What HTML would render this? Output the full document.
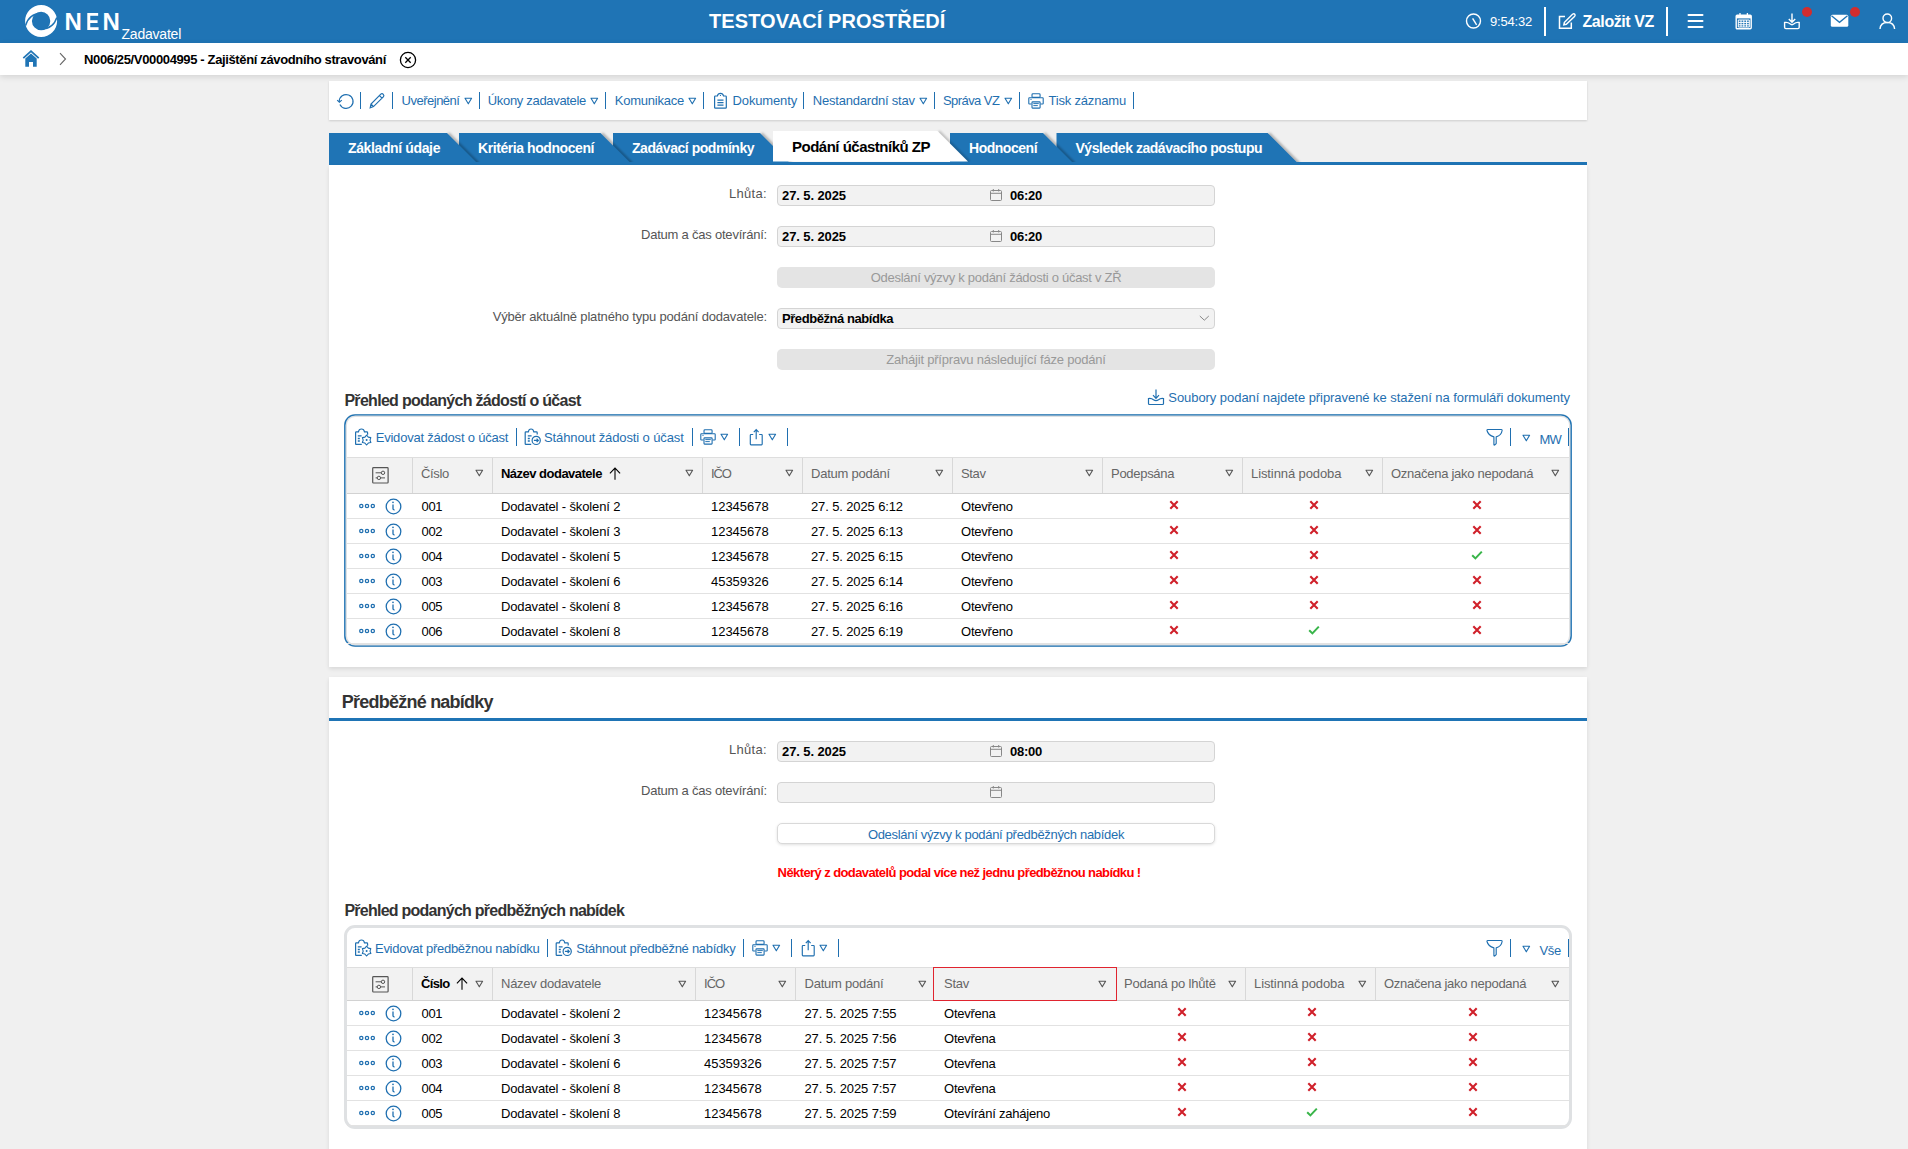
<!DOCTYPE html>
<html><head><meta charset="utf-8"><style>
html,body{margin:0;padding:0;width:1908px;height:1149px;overflow:hidden;background:#f0f0f0;}
body{position:relative;font-family:"Liberation Sans",sans-serif;}
.t{position:absolute;white-space:nowrap;font-family:"Liberation Sans",sans-serif;}
svg{overflow:visible}
</style></head><body>
<div style="position:absolute;left:0px;top:0px;width:1908px;height:43px;background:#1f74b5"></div>
<svg style="position:absolute;left:24px;top:4px" width="35" height="35" viewBox="0 0 35 35"><circle cx="17.1" cy="17" r="12.6" fill="none" stroke="#fff" stroke-width="6.8"/>
<path d="M1.6 21.5 C4 13 9 9.5 17 9.2" fill="none" stroke="#1f74b5" stroke-width="1.4"/>
<path d="M32.8 13.5 C30.5 21 25.5 24.8 17.5 25" fill="none" stroke="#1f74b5" stroke-width="1.4"/></svg>
<div class="t" style="left:64.6px;top:10px;font-size:24px;line-height:24px;color:#fff;font-weight:bold;">N</div>
<div class="t" style="left:85.6px;top:10px;font-size:24px;line-height:24px;color:#fff;font-weight:bold;transform:scaleX(0.83);transform-origin:0 0;">E</div>
<div class="t" style="left:102.4px;top:10px;font-size:24px;line-height:24px;color:#fff;font-weight:bold;">N</div>
<div class="t" style="left:121.5px;top:27px;font-size:14px;line-height:14px;color:#fff;letter-spacing:-0.217px;">Zadavatel</div>
<div class="t" style="left:709.0px;top:11px;font-size:20px;line-height:20px;color:#fff;font-weight:bold;letter-spacing:0.086px;">TESTOVACÍ PROSTŘEDÍ</div>
<svg style="position:absolute;left:1465px;top:13px" width="17" height="17" viewBox="0 0 17 17"><circle cx="8.5" cy="8" r="7" fill="none" stroke="#fff" stroke-width="1.4"/><path d="M7.6 5.3 L11.6 11.8" stroke="#fff" stroke-width="1.4" fill="none"/></svg>
<div class="t" style="left:1490.0px;top:15px;font-size:13px;line-height:13px;color:#fff;letter-spacing:-0.170px;">9:54:32</div>
<div style="position:absolute;left:1544px;top:7px;width:2px;height:29px;background:#fff"></div>
<svg style="position:absolute;left:1557px;top:12px" width="19" height="18" viewBox="0 0 19 18"><path d="M8 4.5 H2.5 V16.3 H14.3 V10.5" fill="none" stroke="#fff" stroke-width="1.5"/><path d="M7.3 10.5 L15.5 2.3 Q17 1.2 17.8 2.3 Q18.6 3.3 17.5 4.6 L9.3 12.3 L6.8 12.8 Z" fill="none" stroke="#fff" stroke-width="1.4"/></svg>
<div class="t" style="left:1582.5px;top:14px;font-size:16px;line-height:16px;color:#fff;font-weight:bold;letter-spacing:-0.411px;">Založit VZ</div>
<div style="position:absolute;left:1666px;top:7px;width:2px;height:29px;background:#fff"></div>
<svg style="position:absolute;left:1687px;top:13px" width="18" height="16" viewBox="0 0 18 16"><path d="M1.5 2 H15.5 M1.5 7.9 H15.5 M1.5 13.9 H15.5" stroke="#fff" stroke-width="2" stroke-linecap="round"/></svg>
<svg style="position:absolute;left:1735px;top:12px" width="18" height="18" viewBox="0 0 18 18"><rect x="1.2" y="3.2" width="15" height="13.6" rx="1" fill="none" stroke="#fff" stroke-width="1.4"/><rect x="1.2" y="3.2" width="15" height="3.2" fill="#fff"/><path d="M5 1 V4 M12.4 1 V4" stroke="#fff" stroke-width="1.3"/><path d="M3.3 8 H14.3 V15 H3.3 Z M3.3 10.4 H14.3 M3.3 12.8 H14.3 M6 8 V15 M8.8 8 V15 M11.6 8 V15" fill="none" stroke="#fff" stroke-width="1"/></svg>
<svg style="position:absolute;left:1783px;top:12px" width="18" height="18" viewBox="0 0 18 18"><path d="M9 1.5 V10 M5.8 7 L9 10.3 L12.2 7" fill="none" stroke="#fff" stroke-width="1.4"/><path d="M1.6 10.5 V15.3 Q1.6 16.6 2.9 16.6 H14.9 Q16.2 16.6 16.2 15.3 V10.5 Q13 10 11 11.8 Q9 13.5 7 11.8 Q5 10 1.6 10.5 Z" fill="none" stroke="#fff" stroke-width="1.4"/></svg>
<div style="position:absolute;left:1802px;top:7px;width:10px;height:10px;border-radius:50%;background:#d22d2d"></div>
<svg style="position:absolute;left:1830px;top:14px" width="19" height="14" viewBox="0 0 19 14"><rect x="0.8" y="0.8" width="17.5" height="12" rx="1.5" fill="#fff"/><path d="M1.5 1.8 L9.5 8.3 L17.5 1.8" fill="none" stroke="#1f74b5" stroke-width="1.3"/></svg>
<div style="position:absolute;left:1850px;top:7px;width:10px;height:10px;border-radius:50%;background:#d22d2d"></div>
<svg style="position:absolute;left:1879px;top:12px" width="17" height="18" viewBox="0 0 17 18"><circle cx="8.3" cy="6.3" r="4.3" fill="none" stroke="#fff" stroke-width="1.4"/><path d="M1 17 Q1.5 10.5 8.3 10.5 Q15.1 10.5 15.6 17" fill="none" stroke="#fff" stroke-width="1.4"/></svg>
<div style="position:absolute;left:0px;top:43px;width:1908px;height:32px;background:#fff;box-shadow:0 2px 6px rgba(0,0,0,0.12)"></div>
<svg style="position:absolute;left:22px;top:50px" width="18" height="18" viewBox="0 0 18 18"><path d="M1.3 8.2 L9 1.2 L16.7 8.2" fill="none" stroke="#1f74b5" stroke-width="1.8"/><path d="M3.3 8.5 L9 3.5 L14.7 8.5 V16.8 H11 V12 H7 V16.8 H3.3 Z" fill="#1f74b5"/></svg>
<svg style="position:absolute;left:58px;top:52px" width="10" height="14" viewBox="0 0 10 14"><path d="M2 1.2 L7.5 7 L2 12.8" fill="none" stroke="#666" stroke-width="1.1"/></svg>
<div class="t" style="left:84.0px;top:53px;font-size:13px;line-height:13px;color:#000;font-weight:bold;letter-spacing:-0.363px;">N006/25/V00004995 - Zajištění závodního stravování</div>
<svg style="position:absolute;left:399px;top:51px" width="18" height="18" viewBox="0 0 18 18"><circle cx="9" cy="9" r="7.6" fill="none" stroke="#000" stroke-width="1.3"/><path d="M6.3 6.3 L11.7 11.7 M11.7 6.3 L6.3 11.7" stroke="#000" stroke-width="1.3"/></svg>
<div style="position:absolute;left:329px;top:81px;width:1258px;height:39px;background:#fff;box-shadow:0 1px 2px rgba(0,0,0,0.15)"></div>
<svg style="position:absolute;left:336px;top:92px" width="18" height="18" viewBox="0 0 18 18"><path d="M3.9 12.4 A6.9 6.9 0 1 0 3.25 9.6" fill="none" stroke="#1f6fb0" stroke-width="1.2"/><path d="M1.2 8.1 L3.4 10.1 L5.8 8.1" fill="none" stroke="#1f6fb0" stroke-width="1.2"/></svg>
<div style="position:absolute;left:360px;top:92px;width:1px;height:17px;background:#1f6fb0"></div>
<svg style="position:absolute;left:368px;top:92px" width="18" height="18" viewBox="0 0 18 18"><path d="M2.2 15.8 L3 12 L12.8 2.2 Q14 1 15.3 2.3 Q16.5 3.6 15.3 4.8 L5.5 14.6 Z M11.5 3.6 L14 6.1 M3 12 L5.5 14.6" fill="none" stroke="#1f6fb0" stroke-width="1.2"/></svg>
<div style="position:absolute;left:392px;top:92px;width:1px;height:17px;background:#1f6fb0"></div>
<div class="t" style="left:401.5px;top:94px;font-size:13px;line-height:13px;color:#1f6fb0;letter-spacing:-0.489px;">Uveřejnění</div>
<svg style="position:absolute;left:464px;top:97px" width="9" height="8" viewBox="0 0 9 8"><path d="M1 1.2 H7.6 L4.3 6.8 Z" fill="none" stroke="#1f6fb0" stroke-width="1.1" stroke-linejoin="round"/></svg>
<div style="position:absolute;left:479px;top:92px;width:1px;height:17px;background:#1f6fb0"></div>
<div class="t" style="left:487.8px;top:94px;font-size:13px;line-height:13px;color:#1f6fb0;letter-spacing:-0.323px;">Úkony zadavatele</div>
<svg style="position:absolute;left:590px;top:97px" width="9" height="8" viewBox="0 0 9 8"><path d="M1 1.2 H7.6 L4.3 6.8 Z" fill="none" stroke="#1f6fb0" stroke-width="1.1" stroke-linejoin="round"/></svg>
<div style="position:absolute;left:605px;top:92px;width:1px;height:17px;background:#1f6fb0"></div>
<div class="t" style="left:614.8px;top:94px;font-size:13px;line-height:13px;color:#1f6fb0;letter-spacing:-0.236px;">Komunikace</div>
<svg style="position:absolute;left:688px;top:97px" width="9" height="8" viewBox="0 0 9 8"><path d="M1 1.2 H7.6 L4.3 6.8 Z" fill="none" stroke="#1f6fb0" stroke-width="1.1" stroke-linejoin="round"/></svg>
<div style="position:absolute;left:703px;top:92px;width:1px;height:17px;background:#1f6fb0"></div>
<svg style="position:absolute;left:713px;top:92px" width="16" height="18" viewBox="0 0 16 18"><path d="M4.4 4 H2.4 Q1.6 4 1.6 4.8 V15.4 Q1.6 16.2 2.4 16.2 H12.5 Q13.3 16.2 13.3 15.4 V4.8 Q13.3 4 12.5 4 H10.5 Q10 1.4 7.45 1.4 Q4.9 1.4 4.4 4 Z" fill="none" stroke="#1f6fb0" stroke-width="1.2"/><circle cx="7.45" cy="3.4" r="0.6" fill="#1f6fb0"/><path d="M4.4 8 H10.5 M4.4 10.5 H10.5 M4.4 13 H10.5" stroke="#1f6fb0" stroke-width="1.25"/></svg>
<div class="t" style="left:732.6px;top:94px;font-size:13px;line-height:13px;color:#1f6fb0;letter-spacing:-0.152px;">Dokumenty</div>
<div style="position:absolute;left:803px;top:92px;width:1px;height:17px;background:#1f6fb0"></div>
<div class="t" style="left:812.7px;top:94px;font-size:13px;line-height:13px;color:#1f6fb0;letter-spacing:-0.196px;">Nestandardní stav</div>
<svg style="position:absolute;left:919px;top:97px" width="9" height="8" viewBox="0 0 9 8"><path d="M1 1.2 H7.6 L4.3 6.8 Z" fill="none" stroke="#1f6fb0" stroke-width="1.1" stroke-linejoin="round"/></svg>
<div style="position:absolute;left:934px;top:92px;width:1px;height:17px;background:#1f6fb0"></div>
<div class="t" style="left:943.0px;top:94px;font-size:13px;line-height:13px;color:#1f6fb0;letter-spacing:-0.569px;">Správa VZ</div>
<svg style="position:absolute;left:1004px;top:97px" width="9" height="8" viewBox="0 0 9 8"><path d="M1 1.2 H7.6 L4.3 6.8 Z" fill="none" stroke="#1f6fb0" stroke-width="1.1" stroke-linejoin="round"/></svg>
<div style="position:absolute;left:1019px;top:92px;width:1px;height:17px;background:#1f6fb0"></div>
<svg style="position:absolute;left:1027px;top:92px" width="18" height="18" viewBox="0 0 18 18"><rect x="5.0" y="1.8" width="8.1" height="3.6" rx="0.9" fill="none" stroke="#1f6fb0" stroke-width="1.1"/><path d="M4.6 12 H2.4 Q1.8 12 1.8 11.4 V6.4 Q1.8 5.8 2.4 5.8 H15.6 Q16.2 5.8 16.2 6.4 V11.4 Q16.2 12 15.6 12 H13.4" fill="none" stroke="#1f6fb0" stroke-width="1.1"/><rect x="5.0" y="9.9" width="8.1" height="6.2" rx="0.6" fill="#fff" stroke="#1f6fb0" stroke-width="1.1"/><path d="M6.3 11.6 H11.8 M6.3 13.6 H10.8 M3.4 7.4 H4.6" stroke="#1f6fb0" stroke-width="0.95"/></svg>
<div class="t" style="left:1048.4px;top:94px;font-size:13px;line-height:13px;color:#1f6fb0;letter-spacing:-0.177px;">Tisk záznamu</div>
<div style="position:absolute;left:1133px;top:92px;width:1px;height:17px;background:#1f6fb0"></div>
<svg style="position:absolute;left:0;top:0" width="1908" height="170"><defs><filter id="blur" x="-20%" y="-20%" width="140%" height="140%"><feGaussianBlur stdDeviation="0.9"/></filter></defs><path d="M1059.5 132 H1268.7" stroke="rgba(0,0,0,0.16)" stroke-width="2" fill="none" filter="url(#blur)"/><path d="M1269.0 133.5 L1299.0 163.5" stroke="rgba(0,0,0,0.28)" stroke-width="3" fill="none" filter="url(#blur)"/><path d="M1056.5 133 H1267.7 L1297.7 163 H1056.5 Z" fill="#1f74b5"/><path d="M953 132 H1044" stroke="rgba(0,0,0,0.16)" stroke-width="2" fill="none" filter="url(#blur)"/><path d="M1044.3 133.5 L1074.3 163.5" stroke="rgba(0,0,0,0.28)" stroke-width="3" fill="none" filter="url(#blur)"/><path d="M950 133 H1043 L1073 163 H950 Z" fill="#1f74b5"/><path d="M616 132 H761" stroke="rgba(0,0,0,0.16)" stroke-width="2" fill="none" filter="url(#blur)"/><path d="M761.3 133.5 L791.3 163.5" stroke="rgba(0,0,0,0.28)" stroke-width="3" fill="none" filter="url(#blur)"/><path d="M613 133 H760 L790 163 H613 Z" fill="#1f74b5"/><path d="M462 132 H601.5" stroke="rgba(0,0,0,0.16)" stroke-width="2" fill="none" filter="url(#blur)"/><path d="M601.8 133.5 L631.8 163.5" stroke="rgba(0,0,0,0.28)" stroke-width="3" fill="none" filter="url(#blur)"/><path d="M459 133 H600.5 L630.5 163 H459 Z" fill="#1f74b5"/><path d="M332 132 H448" stroke="rgba(0,0,0,0.16)" stroke-width="2" fill="none" filter="url(#blur)"/><path d="M448.3 133.5 L478.3 163.5" stroke="rgba(0,0,0,0.28)" stroke-width="3" fill="none" filter="url(#blur)"/><path d="M329 133 H447 L477 163 H329 Z" fill="#1f74b5"/><path d="M938.7 131.5 L968.7 161.5" stroke="rgba(0,0,0,0.22)" stroke-width="3" fill="none" filter="url(#blur)"/><path d="M773 131 H937.5 L968.0 161.5 H773 Z" fill="#fff"/></svg>
<div style="position:absolute;left:329px;top:162px;width:1258px;height:3px;background:#1f74b5"></div>
<div class="t" style="left:348.0px;top:141px;font-size:14px;line-height:14px;color:#fff;font-weight:bold;letter-spacing:-0.372px;">Základní údaje</div>
<div class="t" style="left:478.0px;top:141px;font-size:14px;line-height:14px;color:#fff;font-weight:bold;letter-spacing:-0.424px;">Kritéria hodnocení</div>
<div class="t" style="left:632.0px;top:141px;font-size:14px;line-height:14px;color:#fff;font-weight:bold;letter-spacing:-0.463px;">Zadávací podmínky</div>
<div class="t" style="left:792.0px;top:139px;font-size:15px;line-height:15px;color:#000;font-weight:bold;letter-spacing:-0.500px;">Podání účastníků ZP</div>
<div class="t" style="left:969.0px;top:141px;font-size:14px;line-height:14px;color:#fff;font-weight:bold;letter-spacing:-0.477px;">Hodnocení</div>
<div class="t" style="left:1075.5px;top:141px;font-size:14px;line-height:14px;color:#fff;font-weight:bold;letter-spacing:-0.466px;">Výsledek zadávacího postupu</div>
<div style="position:absolute;left:329px;top:165px;width:1258px;height:502px;background:#fff;box-shadow:0 2px 4px rgba(0,0,0,0.10)"></div>
<div class="t" style="left:729.0px;top:187px;font-size:13px;line-height:13px;color:#555;letter-spacing:0.307px;">Lhůta:</div>
<div style="position:absolute;left:777px;top:185px;width:436px;height:19px;background:#f2f2f2;border:1px solid #d4d4d4;border-radius:4px"></div>
<svg style="position:absolute;left:989px;top:188px" width="14" height="14" viewBox="0 0 14 14"><rect x="1.5" y="2.5" width="11" height="10" rx="1" fill="none" stroke="#888" stroke-width="1"/><path d="M1.5 5.3 H12.5 M4.3 1 V3.5 M9.7 1 V3.5" stroke="#888" stroke-width="1"/></svg>
<div class="t" style="left:782.0px;top:189px;font-size:13px;line-height:13px;color:#000;font-weight:bold;letter-spacing:-0.098px;">27. 5. 2025</div>
<div class="t" style="left:1010.0px;top:189px;font-size:13px;line-height:13px;color:#000;font-weight:bold;letter-spacing:-0.253px;">06:20</div>
<div class="t" style="left:641.0px;top:228px;font-size:13px;line-height:13px;color:#555;letter-spacing:-0.218px;">Datum a čas otevírání:</div>
<div style="position:absolute;left:777px;top:226px;width:436px;height:19px;background:#f2f2f2;border:1px solid #d4d4d4;border-radius:4px"></div>
<svg style="position:absolute;left:989px;top:229px" width="14" height="14" viewBox="0 0 14 14"><rect x="1.5" y="2.5" width="11" height="10" rx="1" fill="none" stroke="#888" stroke-width="1"/><path d="M1.5 5.3 H12.5 M4.3 1 V3.5 M9.7 1 V3.5" stroke="#888" stroke-width="1"/></svg>
<div class="t" style="left:782.0px;top:230px;font-size:13px;line-height:13px;color:#000;font-weight:bold;letter-spacing:-0.098px;">27. 5. 2025</div>
<div class="t" style="left:1010.0px;top:230px;font-size:13px;line-height:13px;color:#000;font-weight:bold;letter-spacing:-0.253px;">06:20</div>
<div style="position:absolute;left:777px;top:267px;width:438px;height:21px;background:#e4e4e4;border-radius:5px"></div>
<div class="t" style="left:870.8px;top:271px;font-size:13px;line-height:13px;color:#999;letter-spacing:-0.285px;">Odeslání výzvy k podání žádosti o účast v ZŘ</div>
<div class="t" style="left:492.7px;top:310px;font-size:13px;line-height:13px;color:#555;letter-spacing:-0.179px;">Výběr aktuálně platného typu podání dodavatele:</div>
<div style="position:absolute;left:777px;top:308px;width:436px;height:19px;background:#f2f2f2;border:1px solid #d4d4d4;border-radius:4px"></div>
<div class="t" style="left:782.0px;top:312px;font-size:13px;line-height:13px;color:#000;font-weight:bold;letter-spacing:-0.440px;">Předběžná nabídka</div>
<svg style="position:absolute;left:1198px;top:313px" width="12" height="10" viewBox="0 0 12 10"><path d="M1.8 3 L6.3 7.2 L10.8 3" fill="none" stroke="#888" stroke-width="1"/></svg>
<div style="position:absolute;left:777px;top:349px;width:438px;height:21px;background:#e4e4e4;border-radius:5px"></div>
<div class="t" style="left:886.2px;top:353px;font-size:13px;line-height:13px;color:#999;letter-spacing:-0.203px;">Zahájit přípravu následující fáze podání</div>
<div class="t" style="left:344.4px;top:393px;font-size:16px;line-height:16px;color:#333;font-weight:bold;letter-spacing:-0.704px;">Přehled podaných žádostí o účast</div>
<svg style="position:absolute;left:1147px;top:388px" width="18" height="18" viewBox="0 0 18 18"><path d="M9 1.5 V10.3 M6 7.2 L9 10.3 L12 7.2" fill="none" stroke="#1f6fb0" stroke-width="1.2"/><path d="M1.5 10.5 V15.5 Q1.5 16.5 2.5 16.5 H15.5 Q16.5 16.5 16.5 15.5 V10.5 Q13.5 10 11.5 11.8 Q9 13.5 6.5 11.8 Q4.5 10 1.5 10.5 Z" fill="none" stroke="#1f6fb0" stroke-width="1.2"/></svg>
<div class="t" style="left:1168.3px;top:391px;font-size:13px;line-height:13px;color:#1f6fb0;letter-spacing:-0.057px;">Soubory podaní najdete připravené ke stažení na formuláři dokumenty</div>
<div style="position:absolute;left:344px;top:414px;width:1222px;height:227px;border:3px solid #dfe1e3;border-radius:11px;background:#fff"></div>
<svg style="position:absolute;left:0;top:0" width="1908" height="1149"><rect x="344.8" y="414.8" width="1226.4" height="231.4" rx="10.5" fill="none" stroke="#1f74b5" stroke-width="1.35"/></svg>
<svg style="position:absolute;left:355px;top:428px" width="18" height="18" viewBox="0 0 18 18"><path d="M6.8 16.4 H1.3 Q0.6 16.4 0.6 15.7 V4.6 Q0.6 3.9 1.3 3.9 H3.4 Q3.9 1 6.45 1 Q9 1 9.5 3.9 H11.8 Q12.6 3.9 12.6 4.7 V6.8" fill="none" stroke="#1f6fb0" stroke-width="1.2"/><path d="M2.8 7.8 H6.6 M2.8 10.5 H4.8 M2.8 13 H4.8" stroke="#1f6fb0" stroke-width="1.3"/><polygon points="11.60,7.20 9.90,9.16 7.36,9.65 8.20,12.10 7.36,14.55 9.90,15.04 11.60,17.00 13.30,15.04 15.84,14.55 15.00,12.10 15.84,9.65 13.30,9.16" fill="#fff" stroke="#1f6fb0" stroke-width="1.1" stroke-linejoin="round"/><circle cx="11.6" cy="12.1" r="1" fill="#1f6fb0"/></svg>
<div class="t" style="left:375.7px;top:431px;font-size:13px;line-height:13px;color:#1f6fb0;letter-spacing:-0.210px;">Evidovat žádost o účast</div>
<div style="position:absolute;left:516px;top:428px;width:1px;height:18px;background:#1f6fb0"></div>
<svg style="position:absolute;left:524px;top:428px" width="18" height="18" viewBox="0 0 18 18"><path d="M7.2 16.4 H1.9 Q1.2 16.4 1.2 15.7 V4.6 Q1.2 3.9 1.9 3.9 H4.3 Q4.8 1 7.05 1 Q9.3 1 9.8 3.9 H12.4 Q13.2 3.9 13.2 4.7 V6.6" fill="none" stroke="#1f6fb0" stroke-width="1.2"/><path d="M3.8 7.8 H7.6 M3.8 10.5 H5.8 M3.8 13 H5.8" stroke="#1f6fb0" stroke-width="1.3"/><circle cx="12.2" cy="12.4" r="4.1" fill="#fff" stroke="#1f6fb0" stroke-width="1.2"/><path d="M9.9 12.4 H14.3 M12.6 10.7 L14.3 12.4 L12.6 14.1" fill="none" stroke="#1f6fb0" stroke-width="1.2"/></svg>
<div class="t" style="left:544.0px;top:431px;font-size:13px;line-height:13px;color:#1f6fb0;letter-spacing:-0.109px;">Stáhnout žádosti o účast</div>
<div style="position:absolute;left:692px;top:428px;width:1px;height:18px;background:#1f6fb0"></div>
<svg style="position:absolute;left:699px;top:428px" width="18" height="18" viewBox="0 0 18 18"><rect x="5.0" y="1.8" width="8.1" height="3.6" rx="0.9" fill="none" stroke="#1f6fb0" stroke-width="1.1"/><path d="M4.6 12 H2.4 Q1.8 12 1.8 11.4 V6.4 Q1.8 5.8 2.4 5.8 H15.6 Q16.2 5.8 16.2 6.4 V11.4 Q16.2 12 15.6 12 H13.4" fill="none" stroke="#1f6fb0" stroke-width="1.1"/><rect x="5.0" y="9.9" width="8.1" height="6.2" rx="0.6" fill="#fff" stroke="#1f6fb0" stroke-width="1.1"/><path d="M6.3 11.6 H11.8 M6.3 13.6 H10.8 M3.4 7.4 H4.6" stroke="#1f6fb0" stroke-width="0.95"/></svg>
<svg style="position:absolute;left:720px;top:433px" width="9" height="8" viewBox="0 0 9 8"><path d="M1 1.2 H7.6 L4.3 6.8 Z" fill="none" stroke="#1f6fb0" stroke-width="1.1" stroke-linejoin="round"/></svg>
<div style="position:absolute;left:739px;top:428px;width:1px;height:18px;background:#1f6fb0"></div>
<svg style="position:absolute;left:748px;top:428px" width="16" height="18" viewBox="0 0 16 18"><path d="M8.2 11.3 V1.8 M5.8 4.2 L8.2 1.6 L10.6 4.2" fill="none" stroke="#1f6fb0" stroke-width="1.15"/><path d="M5.2 6.5 H3 Q2.3 6.5 2.3 7.2 V16.1 Q2.3 16.8 3 16.8 H13.5 Q14.2 16.8 14.2 16.1 V7.2 Q14.2 6.5 13.5 6.5 H11.2" fill="none" stroke="#1f6fb0" stroke-width="1.15"/></svg>
<svg style="position:absolute;left:768px;top:433px" width="9" height="8" viewBox="0 0 9 8"><path d="M1 1.2 H7.6 L4.3 6.8 Z" fill="none" stroke="#1f6fb0" stroke-width="1.1" stroke-linejoin="round"/></svg>
<div style="position:absolute;left:787px;top:428px;width:1px;height:18px;background:#1f6fb0"></div>
<svg style="position:absolute;left:1486px;top:428px" width="18" height="18" viewBox="0 0 18 18"><path d="M1.6 1.5 H15.4 Q16.2 1.5 16.1 2.5 Q15.5 7.2 10.2 8.9 V15.6 L8.6 17 Q7.9 17.3 7.9 16.5 V8.9 Q2.2 7.2 1 2.5 Q0.9 1.5 1.6 1.5 Z" fill="none" stroke="#1f6fb0" stroke-width="1.15" stroke-linejoin="round"/></svg>
<div style="position:absolute;left:1510px;top:428px;width:1px;height:18px;background:#1f6fb0"></div>
<svg style="position:absolute;left:1522px;top:434px" width="9" height="8" viewBox="0 0 9 8"><path d="M1 1.2 H7.6 L4.3 6.8 Z" fill="none" stroke="#1f6fb0" stroke-width="1.1" stroke-linejoin="round"/></svg>
<div class="t" style="left:1539.5px;top:433px;font-size:13px;line-height:13px;color:#1f6fb0;letter-spacing:-0.797px;">MW</div>
<div style="position:absolute;left:1568px;top:428px;width:1px;height:18px;background:#1f6fb0"></div>
<div style="position:absolute;left:347px;top:456.5px;width:1222px;height:37.5px;background:#f2f2f2;border-top:1px solid #dedede;border-bottom:1px solid #d2d2d2;box-sizing:border-box"></div>
<div style="position:absolute;left:412px;top:457.5px;width:1px;height:35.5px;background:#d8d8d8"></div>
<div style="position:absolute;left:492px;top:457.5px;width:1px;height:35.5px;background:#d8d8d8"></div>
<div style="position:absolute;left:702px;top:457.5px;width:1px;height:35.5px;background:#d8d8d8"></div>
<div style="position:absolute;left:802px;top:457.5px;width:1px;height:35.5px;background:#d8d8d8"></div>
<div style="position:absolute;left:952px;top:457.5px;width:1px;height:35.5px;background:#d8d8d8"></div>
<div style="position:absolute;left:1102px;top:457.5px;width:1px;height:35.5px;background:#d8d8d8"></div>
<div style="position:absolute;left:1242px;top:457.5px;width:1px;height:35.5px;background:#d8d8d8"></div>
<div style="position:absolute;left:1382px;top:457.5px;width:1px;height:35.5px;background:#d8d8d8"></div>
<svg style="position:absolute;left:372px;top:466.5px" width="18" height="18" viewBox="0 0 18 18"><rect x="0.7" y="0.6" width="15.4" height="15.4" rx="0.8" fill="none" stroke="#555" stroke-width="1.2"/><path d="M3.6 5.8 H13 M3.6 10.9 H13" stroke="#555" stroke-width="1"/><circle cx="11" cy="5.8" r="1.7" fill="#f2f2f2" stroke="#555" stroke-width="1"/><circle cx="6.9" cy="10.9" r="1.7" fill="#f2f2f2" stroke="#555" stroke-width="1"/></svg>
<div class="t" style="left:421.0px;top:467px;font-size:13px;line-height:13px;color:#666;letter-spacing:-0.325px;">Číslo</div>
<svg style="position:absolute;left:474.5px;top:469.0px" width="9" height="8" viewBox="0 0 9 8"><path d="M1 1.2 H7.6 L4.3 6.8 Z" fill="none" stroke="#555" stroke-width="1.1" stroke-linejoin="round"/></svg>
<div class="t" style="left:501.0px;top:467px;font-size:13px;line-height:13px;color:#000;font-weight:bold;letter-spacing:-0.514px;">Název dodavatele</div>
<svg style="position:absolute;left:684.5px;top:469.0px" width="9" height="8" viewBox="0 0 9 8"><path d="M1 1.2 H7.6 L4.3 6.8 Z" fill="none" stroke="#555" stroke-width="1.1" stroke-linejoin="round"/></svg>
<div class="t" style="left:711.0px;top:467px;font-size:13px;line-height:13px;color:#666;letter-spacing:-1.136px;">IČO</div>
<svg style="position:absolute;left:784.5px;top:469.0px" width="9" height="8" viewBox="0 0 9 8"><path d="M1 1.2 H7.6 L4.3 6.8 Z" fill="none" stroke="#555" stroke-width="1.1" stroke-linejoin="round"/></svg>
<div class="t" style="left:811.0px;top:467px;font-size:13px;line-height:13px;color:#666;letter-spacing:-0.224px;">Datum podání</div>
<svg style="position:absolute;left:934.5px;top:469.0px" width="9" height="8" viewBox="0 0 9 8"><path d="M1 1.2 H7.6 L4.3 6.8 Z" fill="none" stroke="#555" stroke-width="1.1" stroke-linejoin="round"/></svg>
<div class="t" style="left:961.0px;top:467px;font-size:13px;line-height:13px;color:#666;letter-spacing:-0.379px;">Stav</div>
<svg style="position:absolute;left:1084.5px;top:469.0px" width="9" height="8" viewBox="0 0 9 8"><path d="M1 1.2 H7.6 L4.3 6.8 Z" fill="none" stroke="#555" stroke-width="1.1" stroke-linejoin="round"/></svg>
<div class="t" style="left:1111.0px;top:467px;font-size:13px;line-height:13px;color:#666;letter-spacing:-0.290px;">Podepsána</div>
<svg style="position:absolute;left:1224.5px;top:469.0px" width="9" height="8" viewBox="0 0 9 8"><path d="M1 1.2 H7.6 L4.3 6.8 Z" fill="none" stroke="#555" stroke-width="1.1" stroke-linejoin="round"/></svg>
<div class="t" style="left:1251.0px;top:467px;font-size:13px;line-height:13px;color:#666;letter-spacing:-0.096px;">Listinná podoba</div>
<svg style="position:absolute;left:1365px;top:469.0px" width="9" height="8" viewBox="0 0 9 8"><path d="M1 1.2 H7.6 L4.3 6.8 Z" fill="none" stroke="#555" stroke-width="1.1" stroke-linejoin="round"/></svg>
<div class="t" style="left:1391.0px;top:467px;font-size:13px;line-height:13px;color:#666;letter-spacing:-0.270px;">Označena jako nepodaná</div>
<svg style="position:absolute;left:1550.5px;top:469.0px" width="9" height="8" viewBox="0 0 9 8"><path d="M1 1.2 H7.6 L4.3 6.8 Z" fill="none" stroke="#555" stroke-width="1.1" stroke-linejoin="round"/></svg>
<svg style="position:absolute;left:608.5px;top:465.7px" width="12" height="15" viewBox="0 0 12 15"><path d="M6 13.8 V1.9 M0.9 7.4 L6 2 L11.1 7.4" fill="none" stroke="#000" stroke-width="1.1"/></svg>
<div style="position:absolute;left:347px;top:518px;width:1222px;height:1px;background:#e2e2e2"></div>
<svg style="position:absolute;left:358px;top:503px" width="18" height="6" viewBox="0 0 18 6"><circle cx="3.3" cy="3" r="1.65" fill="none" stroke="#1f6fb0" stroke-width="1.25"/><circle cx="9" cy="3" r="1.65" fill="none" stroke="#1f6fb0" stroke-width="1.25"/><circle cx="14.8" cy="3" r="1.65" fill="none" stroke="#1f6fb0" stroke-width="1.25"/></svg>
<svg style="position:absolute;left:384.5px;top:497.5px" width="17" height="17" viewBox="0 0 17 17"><circle cx="8.5" cy="8.5" r="7.3" fill="none" stroke="#1f6fb0" stroke-width="1.3"/><path d="M8 6.6 V10.6 Q8 12 9.6 11.8" fill="none" stroke="#1f6fb0" stroke-width="1.3"/><circle cx="8" cy="4.3" r="0.85" fill="#1f6fb0"/></svg>
<div class="t" style="left:421.5px;top:500px;font-size:13px;line-height:13px;color:#000;letter-spacing:-0.334px;">001</div>
<div class="t" style="left:501.0px;top:500px;font-size:13px;line-height:13px;color:#000;letter-spacing:-0.136px;">Dodavatel - školení 2</div>
<div class="t" style="left:711.0px;top:500px;font-size:13px;line-height:13px;color:#000;letter-spacing:-0.022px;">12345678</div>
<div class="t" style="left:811.0px;top:500px;font-size:13px;line-height:13px;color:#000;letter-spacing:-0.125px;">27. 5. 2025 6:12</div>
<div class="t" style="left:961.0px;top:500px;font-size:13px;line-height:13px;color:#000;letter-spacing:-0.223px;">Otevřeno</div>
<svg style="position:absolute;left:1168.5px;top:500px" width="10" height="10" viewBox="0 0 10 10"><path d="M1.3 1.3 L8.7 8.7 M8.7 1.3 L1.3 8.7" stroke="#d0202a" stroke-width="2.1"/></svg>
<svg style="position:absolute;left:1308.5px;top:500px" width="10" height="10" viewBox="0 0 10 10"><path d="M1.3 1.3 L8.7 8.7 M8.7 1.3 L1.3 8.7" stroke="#d0202a" stroke-width="2.1"/></svg>
<svg style="position:absolute;left:1471.5px;top:500px" width="10" height="10" viewBox="0 0 10 10"><path d="M1.3 1.3 L8.7 8.7 M8.7 1.3 L1.3 8.7" stroke="#d0202a" stroke-width="2.1"/></svg>
<div style="position:absolute;left:347px;top:543px;width:1222px;height:1px;background:#e2e2e2"></div>
<svg style="position:absolute;left:358px;top:528px" width="18" height="6" viewBox="0 0 18 6"><circle cx="3.3" cy="3" r="1.65" fill="none" stroke="#1f6fb0" stroke-width="1.25"/><circle cx="9" cy="3" r="1.65" fill="none" stroke="#1f6fb0" stroke-width="1.25"/><circle cx="14.8" cy="3" r="1.65" fill="none" stroke="#1f6fb0" stroke-width="1.25"/></svg>
<svg style="position:absolute;left:384.5px;top:522.5px" width="17" height="17" viewBox="0 0 17 17"><circle cx="8.5" cy="8.5" r="7.3" fill="none" stroke="#1f6fb0" stroke-width="1.3"/><path d="M8 6.6 V10.6 Q8 12 9.6 11.8" fill="none" stroke="#1f6fb0" stroke-width="1.3"/><circle cx="8" cy="4.3" r="0.85" fill="#1f6fb0"/></svg>
<div class="t" style="left:421.5px;top:525px;font-size:13px;line-height:13px;color:#000;letter-spacing:-0.334px;">002</div>
<div class="t" style="left:501.0px;top:525px;font-size:13px;line-height:13px;color:#000;letter-spacing:-0.136px;">Dodavatel - školení 3</div>
<div class="t" style="left:711.0px;top:525px;font-size:13px;line-height:13px;color:#000;letter-spacing:-0.022px;">12345678</div>
<div class="t" style="left:811.0px;top:525px;font-size:13px;line-height:13px;color:#000;letter-spacing:-0.125px;">27. 5. 2025 6:13</div>
<div class="t" style="left:961.0px;top:525px;font-size:13px;line-height:13px;color:#000;letter-spacing:-0.223px;">Otevřeno</div>
<svg style="position:absolute;left:1168.5px;top:525px" width="10" height="10" viewBox="0 0 10 10"><path d="M1.3 1.3 L8.7 8.7 M8.7 1.3 L1.3 8.7" stroke="#d0202a" stroke-width="2.1"/></svg>
<svg style="position:absolute;left:1308.5px;top:525px" width="10" height="10" viewBox="0 0 10 10"><path d="M1.3 1.3 L8.7 8.7 M8.7 1.3 L1.3 8.7" stroke="#d0202a" stroke-width="2.1"/></svg>
<svg style="position:absolute;left:1471.5px;top:525px" width="10" height="10" viewBox="0 0 10 10"><path d="M1.3 1.3 L8.7 8.7 M8.7 1.3 L1.3 8.7" stroke="#d0202a" stroke-width="2.1"/></svg>
<div style="position:absolute;left:347px;top:568px;width:1222px;height:1px;background:#e2e2e2"></div>
<svg style="position:absolute;left:358px;top:553px" width="18" height="6" viewBox="0 0 18 6"><circle cx="3.3" cy="3" r="1.65" fill="none" stroke="#1f6fb0" stroke-width="1.25"/><circle cx="9" cy="3" r="1.65" fill="none" stroke="#1f6fb0" stroke-width="1.25"/><circle cx="14.8" cy="3" r="1.65" fill="none" stroke="#1f6fb0" stroke-width="1.25"/></svg>
<svg style="position:absolute;left:384.5px;top:547.5px" width="17" height="17" viewBox="0 0 17 17"><circle cx="8.5" cy="8.5" r="7.3" fill="none" stroke="#1f6fb0" stroke-width="1.3"/><path d="M8 6.6 V10.6 Q8 12 9.6 11.8" fill="none" stroke="#1f6fb0" stroke-width="1.3"/><circle cx="8" cy="4.3" r="0.85" fill="#1f6fb0"/></svg>
<div class="t" style="left:421.5px;top:550px;font-size:13px;line-height:13px;color:#000;letter-spacing:-0.334px;">004</div>
<div class="t" style="left:501.0px;top:550px;font-size:13px;line-height:13px;color:#000;letter-spacing:-0.136px;">Dodavatel - školení 5</div>
<div class="t" style="left:711.0px;top:550px;font-size:13px;line-height:13px;color:#000;letter-spacing:-0.022px;">12345678</div>
<div class="t" style="left:811.0px;top:550px;font-size:13px;line-height:13px;color:#000;letter-spacing:-0.125px;">27. 5. 2025 6:15</div>
<div class="t" style="left:961.0px;top:550px;font-size:13px;line-height:13px;color:#000;letter-spacing:-0.223px;">Otevřeno</div>
<svg style="position:absolute;left:1168.5px;top:550px" width="10" height="10" viewBox="0 0 10 10"><path d="M1.3 1.3 L8.7 8.7 M8.7 1.3 L1.3 8.7" stroke="#d0202a" stroke-width="2.1"/></svg>
<svg style="position:absolute;left:1308.5px;top:550px" width="10" height="10" viewBox="0 0 10 10"><path d="M1.3 1.3 L8.7 8.7 M8.7 1.3 L1.3 8.7" stroke="#d0202a" stroke-width="2.1"/></svg>
<svg style="position:absolute;left:1470.5px;top:550px" width="12" height="10" viewBox="0 0 12 10"><path d="M1.2 5.2 L4.4 8.4 L10.8 1.6" fill="none" stroke="#39b54a" stroke-width="2"/></svg>
<div style="position:absolute;left:347px;top:593px;width:1222px;height:1px;background:#e2e2e2"></div>
<svg style="position:absolute;left:358px;top:578px" width="18" height="6" viewBox="0 0 18 6"><circle cx="3.3" cy="3" r="1.65" fill="none" stroke="#1f6fb0" stroke-width="1.25"/><circle cx="9" cy="3" r="1.65" fill="none" stroke="#1f6fb0" stroke-width="1.25"/><circle cx="14.8" cy="3" r="1.65" fill="none" stroke="#1f6fb0" stroke-width="1.25"/></svg>
<svg style="position:absolute;left:384.5px;top:572.5px" width="17" height="17" viewBox="0 0 17 17"><circle cx="8.5" cy="8.5" r="7.3" fill="none" stroke="#1f6fb0" stroke-width="1.3"/><path d="M8 6.6 V10.6 Q8 12 9.6 11.8" fill="none" stroke="#1f6fb0" stroke-width="1.3"/><circle cx="8" cy="4.3" r="0.85" fill="#1f6fb0"/></svg>
<div class="t" style="left:421.5px;top:575px;font-size:13px;line-height:13px;color:#000;letter-spacing:-0.334px;">003</div>
<div class="t" style="left:501.0px;top:575px;font-size:13px;line-height:13px;color:#000;letter-spacing:-0.136px;">Dodavatel - školení 6</div>
<div class="t" style="left:711.0px;top:575px;font-size:13px;line-height:13px;color:#000;letter-spacing:-0.022px;">45359326</div>
<div class="t" style="left:811.0px;top:575px;font-size:13px;line-height:13px;color:#000;letter-spacing:-0.125px;">27. 5. 2025 6:14</div>
<div class="t" style="left:961.0px;top:575px;font-size:13px;line-height:13px;color:#000;letter-spacing:-0.223px;">Otevřeno</div>
<svg style="position:absolute;left:1168.5px;top:575px" width="10" height="10" viewBox="0 0 10 10"><path d="M1.3 1.3 L8.7 8.7 M8.7 1.3 L1.3 8.7" stroke="#d0202a" stroke-width="2.1"/></svg>
<svg style="position:absolute;left:1308.5px;top:575px" width="10" height="10" viewBox="0 0 10 10"><path d="M1.3 1.3 L8.7 8.7 M8.7 1.3 L1.3 8.7" stroke="#d0202a" stroke-width="2.1"/></svg>
<svg style="position:absolute;left:1471.5px;top:575px" width="10" height="10" viewBox="0 0 10 10"><path d="M1.3 1.3 L8.7 8.7 M8.7 1.3 L1.3 8.7" stroke="#d0202a" stroke-width="2.1"/></svg>
<div style="position:absolute;left:347px;top:618px;width:1222px;height:1px;background:#e2e2e2"></div>
<svg style="position:absolute;left:358px;top:603px" width="18" height="6" viewBox="0 0 18 6"><circle cx="3.3" cy="3" r="1.65" fill="none" stroke="#1f6fb0" stroke-width="1.25"/><circle cx="9" cy="3" r="1.65" fill="none" stroke="#1f6fb0" stroke-width="1.25"/><circle cx="14.8" cy="3" r="1.65" fill="none" stroke="#1f6fb0" stroke-width="1.25"/></svg>
<svg style="position:absolute;left:384.5px;top:597.5px" width="17" height="17" viewBox="0 0 17 17"><circle cx="8.5" cy="8.5" r="7.3" fill="none" stroke="#1f6fb0" stroke-width="1.3"/><path d="M8 6.6 V10.6 Q8 12 9.6 11.8" fill="none" stroke="#1f6fb0" stroke-width="1.3"/><circle cx="8" cy="4.3" r="0.85" fill="#1f6fb0"/></svg>
<div class="t" style="left:421.5px;top:600px;font-size:13px;line-height:13px;color:#000;letter-spacing:-0.334px;">005</div>
<div class="t" style="left:501.0px;top:600px;font-size:13px;line-height:13px;color:#000;letter-spacing:-0.136px;">Dodavatel - školení 8</div>
<div class="t" style="left:711.0px;top:600px;font-size:13px;line-height:13px;color:#000;letter-spacing:-0.022px;">12345678</div>
<div class="t" style="left:811.0px;top:600px;font-size:13px;line-height:13px;color:#000;letter-spacing:-0.125px;">27. 5. 2025 6:16</div>
<div class="t" style="left:961.0px;top:600px;font-size:13px;line-height:13px;color:#000;letter-spacing:-0.223px;">Otevřeno</div>
<svg style="position:absolute;left:1168.5px;top:600px" width="10" height="10" viewBox="0 0 10 10"><path d="M1.3 1.3 L8.7 8.7 M8.7 1.3 L1.3 8.7" stroke="#d0202a" stroke-width="2.1"/></svg>
<svg style="position:absolute;left:1308.5px;top:600px" width="10" height="10" viewBox="0 0 10 10"><path d="M1.3 1.3 L8.7 8.7 M8.7 1.3 L1.3 8.7" stroke="#d0202a" stroke-width="2.1"/></svg>
<svg style="position:absolute;left:1471.5px;top:600px" width="10" height="10" viewBox="0 0 10 10"><path d="M1.3 1.3 L8.7 8.7 M8.7 1.3 L1.3 8.7" stroke="#d0202a" stroke-width="2.1"/></svg>
<div style="position:absolute;left:347px;top:643px;width:1222px;height:1px;background:#e2e2e2"></div>
<svg style="position:absolute;left:358px;top:628px" width="18" height="6" viewBox="0 0 18 6"><circle cx="3.3" cy="3" r="1.65" fill="none" stroke="#1f6fb0" stroke-width="1.25"/><circle cx="9" cy="3" r="1.65" fill="none" stroke="#1f6fb0" stroke-width="1.25"/><circle cx="14.8" cy="3" r="1.65" fill="none" stroke="#1f6fb0" stroke-width="1.25"/></svg>
<svg style="position:absolute;left:384.5px;top:622.5px" width="17" height="17" viewBox="0 0 17 17"><circle cx="8.5" cy="8.5" r="7.3" fill="none" stroke="#1f6fb0" stroke-width="1.3"/><path d="M8 6.6 V10.6 Q8 12 9.6 11.8" fill="none" stroke="#1f6fb0" stroke-width="1.3"/><circle cx="8" cy="4.3" r="0.85" fill="#1f6fb0"/></svg>
<div class="t" style="left:421.5px;top:625px;font-size:13px;line-height:13px;color:#000;letter-spacing:-0.334px;">006</div>
<div class="t" style="left:501.0px;top:625px;font-size:13px;line-height:13px;color:#000;letter-spacing:-0.136px;">Dodavatel - školení 8</div>
<div class="t" style="left:711.0px;top:625px;font-size:13px;line-height:13px;color:#000;letter-spacing:-0.022px;">12345678</div>
<div class="t" style="left:811.0px;top:625px;font-size:13px;line-height:13px;color:#000;letter-spacing:-0.125px;">27. 5. 2025 6:19</div>
<div class="t" style="left:961.0px;top:625px;font-size:13px;line-height:13px;color:#000;letter-spacing:-0.223px;">Otevřeno</div>
<svg style="position:absolute;left:1168.5px;top:625px" width="10" height="10" viewBox="0 0 10 10"><path d="M1.3 1.3 L8.7 8.7 M8.7 1.3 L1.3 8.7" stroke="#d0202a" stroke-width="2.1"/></svg>
<svg style="position:absolute;left:1307.5px;top:625px" width="12" height="10" viewBox="0 0 12 10"><path d="M1.2 5.2 L4.4 8.4 L10.8 1.6" fill="none" stroke="#39b54a" stroke-width="2"/></svg>
<svg style="position:absolute;left:1471.5px;top:625px" width="10" height="10" viewBox="0 0 10 10"><path d="M1.3 1.3 L8.7 8.7 M8.7 1.3 L1.3 8.7" stroke="#d0202a" stroke-width="2.1"/></svg>
<div style="position:absolute;left:329px;top:677px;width:1258px;height:480px;background:#fff;box-shadow:0 2px 4px rgba(0,0,0,0.10)"></div>
<div class="t" style="left:341.8px;top:693px;font-size:18px;line-height:18px;color:#333;font-weight:bold;letter-spacing:-0.770px;">Předběžné nabídky</div>
<div style="position:absolute;left:329px;top:718px;width:1258px;height:3px;background:#1f74b5"></div>
<div class="t" style="left:729.0px;top:743px;font-size:13px;line-height:13px;color:#555;letter-spacing:0.307px;">Lhůta:</div>
<div style="position:absolute;left:777px;top:741px;width:436px;height:19px;background:#f2f2f2;border:1px solid #d4d4d4;border-radius:4px"></div>
<svg style="position:absolute;left:989px;top:744px" width="14" height="14" viewBox="0 0 14 14"><rect x="1.5" y="2.5" width="11" height="10" rx="1" fill="none" stroke="#888" stroke-width="1"/><path d="M1.5 5.3 H12.5 M4.3 1 V3.5 M9.7 1 V3.5" stroke="#888" stroke-width="1"/></svg>
<div class="t" style="left:782.0px;top:745px;font-size:13px;line-height:13px;color:#000;font-weight:bold;letter-spacing:-0.098px;">27. 5. 2025</div>
<div class="t" style="left:1010.0px;top:745px;font-size:13px;line-height:13px;color:#000;font-weight:bold;letter-spacing:-0.253px;">08:00</div>
<div class="t" style="left:641.0px;top:784px;font-size:13px;line-height:13px;color:#555;letter-spacing:-0.218px;">Datum a čas otevírání:</div>
<div style="position:absolute;left:777px;top:782px;width:436px;height:19px;background:#f2f2f2;border:1px solid #d4d4d4;border-radius:4px"></div>
<svg style="position:absolute;left:989px;top:785px" width="14" height="14" viewBox="0 0 14 14"><rect x="1.5" y="2.5" width="11" height="10" rx="1" fill="none" stroke="#888" stroke-width="1"/><path d="M1.5 5.3 H12.5 M4.3 1 V3.5 M9.7 1 V3.5" stroke="#888" stroke-width="1"/></svg>
<div style="position:absolute;left:777px;top:823px;width:436px;height:19px;background:#fff;border:1px solid #d9d9d9;border-radius:5px;box-shadow:0 1px 3px rgba(0,0,0,0.12)"></div>
<div class="t" style="left:867.9px;top:828px;font-size:13px;line-height:13px;color:#1f6fb0;letter-spacing:-0.310px;">Odeslání výzvy k podání předběžných nabídek</div>
<div class="t" style="left:777.6px;top:866px;font-size:13px;line-height:13px;color:#f00;font-weight:bold;letter-spacing:-0.588px;">Některý z dodavatelů podal více než jednu předběžnou nabídku !</div>
<div class="t" style="left:344.4px;top:903px;font-size:16px;line-height:16px;color:#333;font-weight:bold;letter-spacing:-0.750px;">Přehled podaných předběžných nabídek</div>
<div style="position:absolute;left:344px;top:925px;width:1222px;height:198px;border:3px solid #dfe1e3;border-radius:11px;background:#fff"></div>
<svg style="position:absolute;left:355px;top:939px" width="18" height="18" viewBox="0 0 18 18"><path d="M6.8 16.4 H1.3 Q0.6 16.4 0.6 15.7 V4.6 Q0.6 3.9 1.3 3.9 H3.4 Q3.9 1 6.45 1 Q9 1 9.5 3.9 H11.8 Q12.6 3.9 12.6 4.7 V6.8" fill="none" stroke="#1f6fb0" stroke-width="1.2"/><path d="M2.8 7.8 H6.6 M2.8 10.5 H4.8 M2.8 13 H4.8" stroke="#1f6fb0" stroke-width="1.3"/><polygon points="11.60,7.20 9.90,9.16 7.36,9.65 8.20,12.10 7.36,14.55 9.90,15.04 11.60,17.00 13.30,15.04 15.84,14.55 15.00,12.10 15.84,9.65 13.30,9.16" fill="#fff" stroke="#1f6fb0" stroke-width="1.1" stroke-linejoin="round"/><circle cx="11.6" cy="12.1" r="1" fill="#1f6fb0"/></svg>
<div class="t" style="left:375.0px;top:942px;font-size:13px;line-height:13px;color:#1f6fb0;letter-spacing:-0.277px;">Evidovat předběžnou nabídku</div>
<div style="position:absolute;left:547px;top:939px;width:1px;height:18px;background:#1f6fb0"></div>
<svg style="position:absolute;left:555px;top:939px" width="18" height="18" viewBox="0 0 18 18"><path d="M7.2 16.4 H1.9 Q1.2 16.4 1.2 15.7 V4.6 Q1.2 3.9 1.9 3.9 H4.3 Q4.8 1 7.05 1 Q9.3 1 9.8 3.9 H12.4 Q13.2 3.9 13.2 4.7 V6.6" fill="none" stroke="#1f6fb0" stroke-width="1.2"/><path d="M3.8 7.8 H7.6 M3.8 10.5 H5.8 M3.8 13 H5.8" stroke="#1f6fb0" stroke-width="1.3"/><circle cx="12.2" cy="12.4" r="4.1" fill="#fff" stroke="#1f6fb0" stroke-width="1.2"/><path d="M9.9 12.4 H14.3 M12.6 10.7 L14.3 12.4 L12.6 14.1" fill="none" stroke="#1f6fb0" stroke-width="1.2"/></svg>
<div class="t" style="left:576.3px;top:942px;font-size:13px;line-height:13px;color:#1f6fb0;letter-spacing:-0.269px;">Stáhnout předběžné nabídky</div>
<div style="position:absolute;left:743px;top:939px;width:1px;height:18px;background:#1f6fb0"></div>
<svg style="position:absolute;left:751px;top:939px" width="18" height="18" viewBox="0 0 18 18"><rect x="5.0" y="1.8" width="8.1" height="3.6" rx="0.9" fill="none" stroke="#1f6fb0" stroke-width="1.1"/><path d="M4.6 12 H2.4 Q1.8 12 1.8 11.4 V6.4 Q1.8 5.8 2.4 5.8 H15.6 Q16.2 5.8 16.2 6.4 V11.4 Q16.2 12 15.6 12 H13.4" fill="none" stroke="#1f6fb0" stroke-width="1.1"/><rect x="5.0" y="9.9" width="8.1" height="6.2" rx="0.6" fill="#fff" stroke="#1f6fb0" stroke-width="1.1"/><path d="M6.3 11.6 H11.8 M6.3 13.6 H10.8 M3.4 7.4 H4.6" stroke="#1f6fb0" stroke-width="0.95"/></svg>
<svg style="position:absolute;left:772px;top:944px" width="9" height="8" viewBox="0 0 9 8"><path d="M1 1.2 H7.6 L4.3 6.8 Z" fill="none" stroke="#1f6fb0" stroke-width="1.1" stroke-linejoin="round"/></svg>
<div style="position:absolute;left:791px;top:939px;width:1px;height:18px;background:#1f6fb0"></div>
<svg style="position:absolute;left:800px;top:939px" width="16" height="18" viewBox="0 0 16 18"><path d="M8.2 11.3 V1.8 M5.8 4.2 L8.2 1.6 L10.6 4.2" fill="none" stroke="#1f6fb0" stroke-width="1.15"/><path d="M5.2 6.5 H3 Q2.3 6.5 2.3 7.2 V16.1 Q2.3 16.8 3 16.8 H13.5 Q14.2 16.8 14.2 16.1 V7.2 Q14.2 6.5 13.5 6.5 H11.2" fill="none" stroke="#1f6fb0" stroke-width="1.15"/></svg>
<svg style="position:absolute;left:819px;top:944px" width="9" height="8" viewBox="0 0 9 8"><path d="M1 1.2 H7.6 L4.3 6.8 Z" fill="none" stroke="#1f6fb0" stroke-width="1.1" stroke-linejoin="round"/></svg>
<div style="position:absolute;left:838px;top:939px;width:1px;height:18px;background:#1f6fb0"></div>
<svg style="position:absolute;left:1486px;top:939px" width="18" height="18" viewBox="0 0 18 18"><path d="M1.6 1.5 H15.4 Q16.2 1.5 16.1 2.5 Q15.5 7.2 10.2 8.9 V15.6 L8.6 17 Q7.9 17.3 7.9 16.5 V8.9 Q2.2 7.2 1 2.5 Q0.9 1.5 1.6 1.5 Z" fill="none" stroke="#1f6fb0" stroke-width="1.15" stroke-linejoin="round"/></svg>
<div style="position:absolute;left:1510px;top:939px;width:1px;height:18px;background:#1f6fb0"></div>
<svg style="position:absolute;left:1522px;top:945px" width="9" height="8" viewBox="0 0 9 8"><path d="M1 1.2 H7.6 L4.3 6.8 Z" fill="none" stroke="#1f6fb0" stroke-width="1.1" stroke-linejoin="round"/></svg>
<div class="t" style="left:1539.5px;top:944px;font-size:13px;line-height:13px;color:#1f6fb0;letter-spacing:-0.302px;">Vše</div>
<div style="position:absolute;left:1568px;top:939px;width:1px;height:18px;background:#1f6fb0"></div>
<div style="position:absolute;left:347px;top:967px;width:1222px;height:34px;background:#f2f2f2;border-top:1px solid #dedede;border-bottom:1px solid #d2d2d2;box-sizing:border-box"></div>
<div style="position:absolute;left:412px;top:968px;width:1px;height:32px;background:#d8d8d8"></div>
<div style="position:absolute;left:492px;top:968px;width:1px;height:32px;background:#d8d8d8"></div>
<div style="position:absolute;left:695px;top:968px;width:1px;height:32px;background:#d8d8d8"></div>
<div style="position:absolute;left:795px;top:968px;width:1px;height:32px;background:#d8d8d8"></div>
<div style="position:absolute;left:933px;top:968px;width:1px;height:32px;background:#d8d8d8"></div>
<div style="position:absolute;left:1116px;top:968px;width:1px;height:32px;background:#d8d8d8"></div>
<div style="position:absolute;left:1245px;top:968px;width:1px;height:32px;background:#d8d8d8"></div>
<div style="position:absolute;left:1375px;top:968px;width:1px;height:32px;background:#d8d8d8"></div>
<svg style="position:absolute;left:372px;top:976px" width="18" height="18" viewBox="0 0 18 18"><rect x="0.7" y="0.6" width="15.4" height="15.4" rx="0.8" fill="none" stroke="#555" stroke-width="1.2"/><path d="M3.6 5.8 H13 M3.6 10.9 H13" stroke="#555" stroke-width="1"/><circle cx="11" cy="5.8" r="1.7" fill="#f2f2f2" stroke="#555" stroke-width="1"/><circle cx="6.9" cy="10.9" r="1.7" fill="#f2f2f2" stroke="#555" stroke-width="1"/></svg>
<div class="t" style="left:421.0px;top:977px;font-size:13px;line-height:13px;color:#000;font-weight:bold;letter-spacing:-0.636px;">Číslo</div>
<svg style="position:absolute;left:474.5px;top:979.5px" width="9" height="8" viewBox="0 0 9 8"><path d="M1 1.2 H7.6 L4.3 6.8 Z" fill="none" stroke="#555" stroke-width="1.1" stroke-linejoin="round"/></svg>
<div class="t" style="left:501.0px;top:977px;font-size:13px;line-height:13px;color:#666;letter-spacing:-0.251px;">Název dodavatele</div>
<svg style="position:absolute;left:677.5px;top:979.5px" width="9" height="8" viewBox="0 0 9 8"><path d="M1 1.2 H7.6 L4.3 6.8 Z" fill="none" stroke="#555" stroke-width="1.1" stroke-linejoin="round"/></svg>
<div class="t" style="left:704.0px;top:977px;font-size:13px;line-height:13px;color:#666;letter-spacing:-0.970px;">IČO</div>
<svg style="position:absolute;left:777.5px;top:979.5px" width="9" height="8" viewBox="0 0 9 8"><path d="M1 1.2 H7.6 L4.3 6.8 Z" fill="none" stroke="#555" stroke-width="1.1" stroke-linejoin="round"/></svg>
<div class="t" style="left:804.5px;top:977px;font-size:13px;line-height:13px;color:#666;letter-spacing:-0.232px;">Datum podání</div>
<svg style="position:absolute;left:917.5px;top:979.5px" width="9" height="8" viewBox="0 0 9 8"><path d="M1 1.2 H7.6 L4.3 6.8 Z" fill="none" stroke="#555" stroke-width="1.1" stroke-linejoin="round"/></svg>
<div class="t" style="left:944.0px;top:977px;font-size:13px;line-height:13px;color:#666;letter-spacing:-0.279px;">Stav</div>
<svg style="position:absolute;left:1098px;top:979.5px" width="9" height="8" viewBox="0 0 9 8"><path d="M1 1.2 H7.6 L4.3 6.8 Z" fill="none" stroke="#555" stroke-width="1.1" stroke-linejoin="round"/></svg>
<div class="t" style="left:1124.0px;top:977px;font-size:13px;line-height:13px;color:#666;letter-spacing:-0.202px;">Podaná po lhůtě</div>
<svg style="position:absolute;left:1227.5px;top:979.5px" width="9" height="8" viewBox="0 0 9 8"><path d="M1 1.2 H7.6 L4.3 6.8 Z" fill="none" stroke="#555" stroke-width="1.1" stroke-linejoin="round"/></svg>
<div class="t" style="left:1254.0px;top:977px;font-size:13px;line-height:13px;color:#666;letter-spacing:-0.096px;">Listinná podoba</div>
<svg style="position:absolute;left:1357.5px;top:979.5px" width="9" height="8" viewBox="0 0 9 8"><path d="M1 1.2 H7.6 L4.3 6.8 Z" fill="none" stroke="#555" stroke-width="1.1" stroke-linejoin="round"/></svg>
<div class="t" style="left:1384.0px;top:977px;font-size:13px;line-height:13px;color:#666;letter-spacing:-0.270px;">Označena jako nepodaná</div>
<svg style="position:absolute;left:1550.5px;top:979.5px" width="9" height="8" viewBox="0 0 9 8"><path d="M1 1.2 H7.6 L4.3 6.8 Z" fill="none" stroke="#555" stroke-width="1.1" stroke-linejoin="round"/></svg>
<svg style="position:absolute;left:455.5px;top:976.2px" width="12" height="15" viewBox="0 0 12 15"><path d="M6 13.8 V1.9 M0.9 7.4 L6 2 L11.1 7.4" fill="none" stroke="#000" stroke-width="1.1"/></svg>
<div style="position:absolute;left:933px;top:967px;width:184px;height:34px;border:1.5px solid #e0242f;box-sizing:border-box"></div>
<div style="position:absolute;left:347px;top:1025px;width:1222px;height:1px;background:#e2e2e2"></div>
<svg style="position:absolute;left:358px;top:1010px" width="18" height="6" viewBox="0 0 18 6"><circle cx="3.3" cy="3" r="1.65" fill="none" stroke="#1f6fb0" stroke-width="1.25"/><circle cx="9" cy="3" r="1.65" fill="none" stroke="#1f6fb0" stroke-width="1.25"/><circle cx="14.8" cy="3" r="1.65" fill="none" stroke="#1f6fb0" stroke-width="1.25"/></svg>
<svg style="position:absolute;left:384.5px;top:1004.5px" width="17" height="17" viewBox="0 0 17 17"><circle cx="8.5" cy="8.5" r="7.3" fill="none" stroke="#1f6fb0" stroke-width="1.3"/><path d="M8 6.6 V10.6 Q8 12 9.6 11.8" fill="none" stroke="#1f6fb0" stroke-width="1.3"/><circle cx="8" cy="4.3" r="0.85" fill="#1f6fb0"/></svg>
<div class="t" style="left:421.5px;top:1007px;font-size:13px;line-height:13px;color:#000;letter-spacing:-0.334px;">001</div>
<div class="t" style="left:501.0px;top:1007px;font-size:13px;line-height:13px;color:#000;letter-spacing:-0.136px;">Dodavatel - školení 2</div>
<div class="t" style="left:704.0px;top:1007px;font-size:13px;line-height:13px;color:#000;letter-spacing:-0.022px;">12345678</div>
<div class="t" style="left:804.5px;top:1007px;font-size:13px;line-height:13px;color:#000;letter-spacing:-0.125px;">27. 5. 2025 7:55</div>
<div class="t" style="left:944.0px;top:1007px;font-size:13px;line-height:13px;color:#000;letter-spacing:-0.234px;">Otevřena</div>
<svg style="position:absolute;left:1176.5px;top:1007px" width="10" height="10" viewBox="0 0 10 10"><path d="M1.3 1.3 L8.7 8.7 M8.7 1.3 L1.3 8.7" stroke="#d0202a" stroke-width="2.1"/></svg>
<svg style="position:absolute;left:1306.5px;top:1007px" width="10" height="10" viewBox="0 0 10 10"><path d="M1.3 1.3 L8.7 8.7 M8.7 1.3 L1.3 8.7" stroke="#d0202a" stroke-width="2.1"/></svg>
<svg style="position:absolute;left:1468.0px;top:1007px" width="10" height="10" viewBox="0 0 10 10"><path d="M1.3 1.3 L8.7 8.7 M8.7 1.3 L1.3 8.7" stroke="#d0202a" stroke-width="2.1"/></svg>
<div style="position:absolute;left:347px;top:1050px;width:1222px;height:1px;background:#e2e2e2"></div>
<svg style="position:absolute;left:358px;top:1035px" width="18" height="6" viewBox="0 0 18 6"><circle cx="3.3" cy="3" r="1.65" fill="none" stroke="#1f6fb0" stroke-width="1.25"/><circle cx="9" cy="3" r="1.65" fill="none" stroke="#1f6fb0" stroke-width="1.25"/><circle cx="14.8" cy="3" r="1.65" fill="none" stroke="#1f6fb0" stroke-width="1.25"/></svg>
<svg style="position:absolute;left:384.5px;top:1029.5px" width="17" height="17" viewBox="0 0 17 17"><circle cx="8.5" cy="8.5" r="7.3" fill="none" stroke="#1f6fb0" stroke-width="1.3"/><path d="M8 6.6 V10.6 Q8 12 9.6 11.8" fill="none" stroke="#1f6fb0" stroke-width="1.3"/><circle cx="8" cy="4.3" r="0.85" fill="#1f6fb0"/></svg>
<div class="t" style="left:421.5px;top:1032px;font-size:13px;line-height:13px;color:#000;letter-spacing:-0.334px;">002</div>
<div class="t" style="left:501.0px;top:1032px;font-size:13px;line-height:13px;color:#000;letter-spacing:-0.136px;">Dodavatel - školení 3</div>
<div class="t" style="left:704.0px;top:1032px;font-size:13px;line-height:13px;color:#000;letter-spacing:-0.022px;">12345678</div>
<div class="t" style="left:804.5px;top:1032px;font-size:13px;line-height:13px;color:#000;letter-spacing:-0.125px;">27. 5. 2025 7:56</div>
<div class="t" style="left:944.0px;top:1032px;font-size:13px;line-height:13px;color:#000;letter-spacing:-0.234px;">Otevřena</div>
<svg style="position:absolute;left:1176.5px;top:1032px" width="10" height="10" viewBox="0 0 10 10"><path d="M1.3 1.3 L8.7 8.7 M8.7 1.3 L1.3 8.7" stroke="#d0202a" stroke-width="2.1"/></svg>
<svg style="position:absolute;left:1306.5px;top:1032px" width="10" height="10" viewBox="0 0 10 10"><path d="M1.3 1.3 L8.7 8.7 M8.7 1.3 L1.3 8.7" stroke="#d0202a" stroke-width="2.1"/></svg>
<svg style="position:absolute;left:1468.0px;top:1032px" width="10" height="10" viewBox="0 0 10 10"><path d="M1.3 1.3 L8.7 8.7 M8.7 1.3 L1.3 8.7" stroke="#d0202a" stroke-width="2.1"/></svg>
<div style="position:absolute;left:347px;top:1075px;width:1222px;height:1px;background:#e2e2e2"></div>
<svg style="position:absolute;left:358px;top:1060px" width="18" height="6" viewBox="0 0 18 6"><circle cx="3.3" cy="3" r="1.65" fill="none" stroke="#1f6fb0" stroke-width="1.25"/><circle cx="9" cy="3" r="1.65" fill="none" stroke="#1f6fb0" stroke-width="1.25"/><circle cx="14.8" cy="3" r="1.65" fill="none" stroke="#1f6fb0" stroke-width="1.25"/></svg>
<svg style="position:absolute;left:384.5px;top:1054.5px" width="17" height="17" viewBox="0 0 17 17"><circle cx="8.5" cy="8.5" r="7.3" fill="none" stroke="#1f6fb0" stroke-width="1.3"/><path d="M8 6.6 V10.6 Q8 12 9.6 11.8" fill="none" stroke="#1f6fb0" stroke-width="1.3"/><circle cx="8" cy="4.3" r="0.85" fill="#1f6fb0"/></svg>
<div class="t" style="left:421.5px;top:1057px;font-size:13px;line-height:13px;color:#000;letter-spacing:-0.334px;">003</div>
<div class="t" style="left:501.0px;top:1057px;font-size:13px;line-height:13px;color:#000;letter-spacing:-0.136px;">Dodavatel - školení 6</div>
<div class="t" style="left:704.0px;top:1057px;font-size:13px;line-height:13px;color:#000;letter-spacing:-0.022px;">45359326</div>
<div class="t" style="left:804.5px;top:1057px;font-size:13px;line-height:13px;color:#000;letter-spacing:-0.125px;">27. 5. 2025 7:57</div>
<div class="t" style="left:944.0px;top:1057px;font-size:13px;line-height:13px;color:#000;letter-spacing:-0.234px;">Otevřena</div>
<svg style="position:absolute;left:1176.5px;top:1057px" width="10" height="10" viewBox="0 0 10 10"><path d="M1.3 1.3 L8.7 8.7 M8.7 1.3 L1.3 8.7" stroke="#d0202a" stroke-width="2.1"/></svg>
<svg style="position:absolute;left:1306.5px;top:1057px" width="10" height="10" viewBox="0 0 10 10"><path d="M1.3 1.3 L8.7 8.7 M8.7 1.3 L1.3 8.7" stroke="#d0202a" stroke-width="2.1"/></svg>
<svg style="position:absolute;left:1468.0px;top:1057px" width="10" height="10" viewBox="0 0 10 10"><path d="M1.3 1.3 L8.7 8.7 M8.7 1.3 L1.3 8.7" stroke="#d0202a" stroke-width="2.1"/></svg>
<div style="position:absolute;left:347px;top:1100px;width:1222px;height:1px;background:#e2e2e2"></div>
<svg style="position:absolute;left:358px;top:1085px" width="18" height="6" viewBox="0 0 18 6"><circle cx="3.3" cy="3" r="1.65" fill="none" stroke="#1f6fb0" stroke-width="1.25"/><circle cx="9" cy="3" r="1.65" fill="none" stroke="#1f6fb0" stroke-width="1.25"/><circle cx="14.8" cy="3" r="1.65" fill="none" stroke="#1f6fb0" stroke-width="1.25"/></svg>
<svg style="position:absolute;left:384.5px;top:1079.5px" width="17" height="17" viewBox="0 0 17 17"><circle cx="8.5" cy="8.5" r="7.3" fill="none" stroke="#1f6fb0" stroke-width="1.3"/><path d="M8 6.6 V10.6 Q8 12 9.6 11.8" fill="none" stroke="#1f6fb0" stroke-width="1.3"/><circle cx="8" cy="4.3" r="0.85" fill="#1f6fb0"/></svg>
<div class="t" style="left:421.5px;top:1082px;font-size:13px;line-height:13px;color:#000;letter-spacing:-0.334px;">004</div>
<div class="t" style="left:501.0px;top:1082px;font-size:13px;line-height:13px;color:#000;letter-spacing:-0.136px;">Dodavatel - školení 8</div>
<div class="t" style="left:704.0px;top:1082px;font-size:13px;line-height:13px;color:#000;letter-spacing:-0.022px;">12345678</div>
<div class="t" style="left:804.5px;top:1082px;font-size:13px;line-height:13px;color:#000;letter-spacing:-0.125px;">27. 5. 2025 7:57</div>
<div class="t" style="left:944.0px;top:1082px;font-size:13px;line-height:13px;color:#000;letter-spacing:-0.234px;">Otevřena</div>
<svg style="position:absolute;left:1176.5px;top:1082px" width="10" height="10" viewBox="0 0 10 10"><path d="M1.3 1.3 L8.7 8.7 M8.7 1.3 L1.3 8.7" stroke="#d0202a" stroke-width="2.1"/></svg>
<svg style="position:absolute;left:1306.5px;top:1082px" width="10" height="10" viewBox="0 0 10 10"><path d="M1.3 1.3 L8.7 8.7 M8.7 1.3 L1.3 8.7" stroke="#d0202a" stroke-width="2.1"/></svg>
<svg style="position:absolute;left:1468.0px;top:1082px" width="10" height="10" viewBox="0 0 10 10"><path d="M1.3 1.3 L8.7 8.7 M8.7 1.3 L1.3 8.7" stroke="#d0202a" stroke-width="2.1"/></svg>
<div style="position:absolute;left:347px;top:1125px;width:1222px;height:1px;background:#e2e2e2"></div>
<svg style="position:absolute;left:358px;top:1110px" width="18" height="6" viewBox="0 0 18 6"><circle cx="3.3" cy="3" r="1.65" fill="none" stroke="#1f6fb0" stroke-width="1.25"/><circle cx="9" cy="3" r="1.65" fill="none" stroke="#1f6fb0" stroke-width="1.25"/><circle cx="14.8" cy="3" r="1.65" fill="none" stroke="#1f6fb0" stroke-width="1.25"/></svg>
<svg style="position:absolute;left:384.5px;top:1104.5px" width="17" height="17" viewBox="0 0 17 17"><circle cx="8.5" cy="8.5" r="7.3" fill="none" stroke="#1f6fb0" stroke-width="1.3"/><path d="M8 6.6 V10.6 Q8 12 9.6 11.8" fill="none" stroke="#1f6fb0" stroke-width="1.3"/><circle cx="8" cy="4.3" r="0.85" fill="#1f6fb0"/></svg>
<div class="t" style="left:421.5px;top:1107px;font-size:13px;line-height:13px;color:#000;letter-spacing:-0.334px;">005</div>
<div class="t" style="left:501.0px;top:1107px;font-size:13px;line-height:13px;color:#000;letter-spacing:-0.136px;">Dodavatel - školení 8</div>
<div class="t" style="left:704.0px;top:1107px;font-size:13px;line-height:13px;color:#000;letter-spacing:-0.022px;">12345678</div>
<div class="t" style="left:804.5px;top:1107px;font-size:13px;line-height:13px;color:#000;letter-spacing:-0.125px;">27. 5. 2025 7:59</div>
<div class="t" style="left:944.0px;top:1107px;font-size:13px;line-height:13px;color:#000;letter-spacing:-0.214px;">Otevírání zahájeno</div>
<svg style="position:absolute;left:1176.5px;top:1107px" width="10" height="10" viewBox="0 0 10 10"><path d="M1.3 1.3 L8.7 8.7 M8.7 1.3 L1.3 8.7" stroke="#d0202a" stroke-width="2.1"/></svg>
<svg style="position:absolute;left:1305.5px;top:1107px" width="12" height="10" viewBox="0 0 12 10"><path d="M1.2 5.2 L4.4 8.4 L10.8 1.6" fill="none" stroke="#39b54a" stroke-width="2"/></svg>
<svg style="position:absolute;left:1468.0px;top:1107px" width="10" height="10" viewBox="0 0 10 10"><path d="M1.3 1.3 L8.7 8.7 M8.7 1.3 L1.3 8.7" stroke="#d0202a" stroke-width="2.1"/></svg>
</body></html>
